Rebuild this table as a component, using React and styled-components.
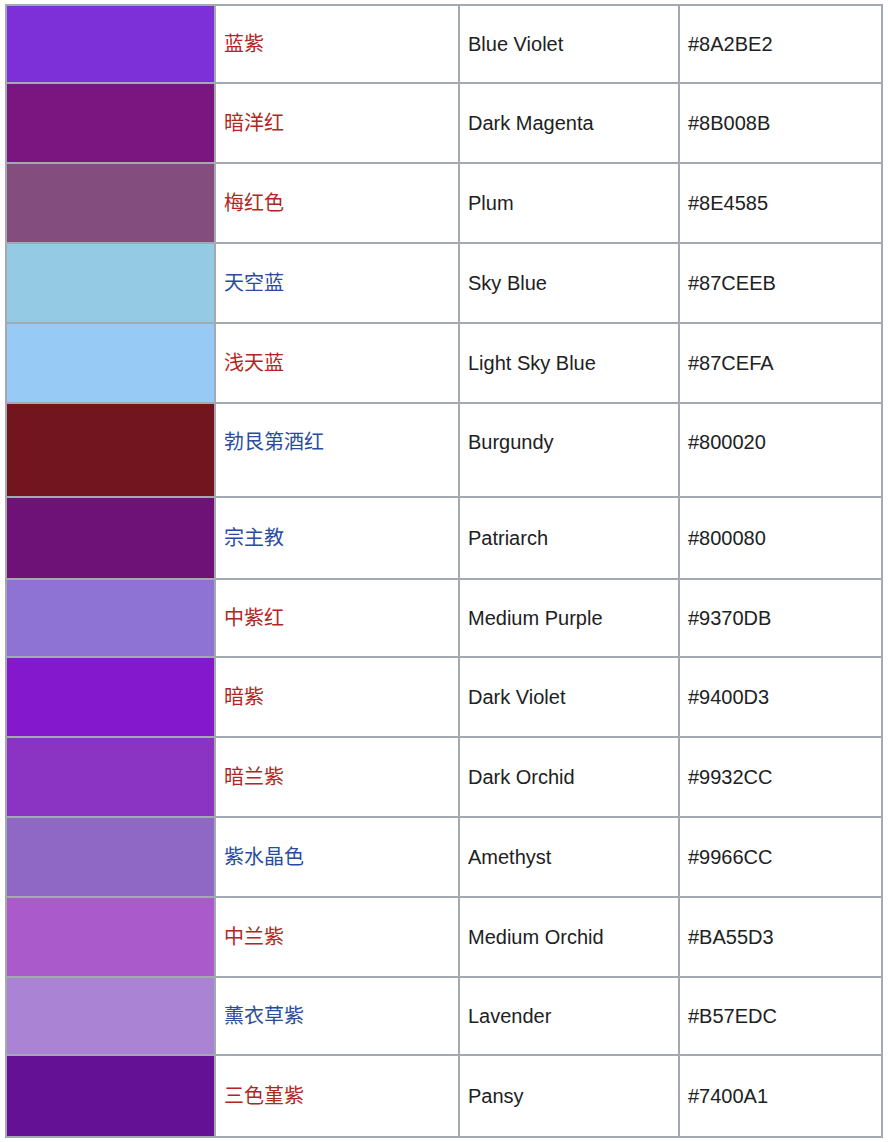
import styled, { createGlobalStyle } from "styled-components";

//Data
const colors = [
  { swatch: "#7d30d8", zh: "蓝紫", tone: "red", en: "Blue Violet", hex: "#8A2BE2", h: 78 },
  { swatch: "#7b1580", zh: "暗洋红", tone: "red", en: "Dark Magenta", hex: "#8B008B", h: 80 },
  { swatch: "#834d7e", zh: "梅红色", tone: "red", en: "Plum", hex: "#8E4585", h: 80 },
  { swatch: "#95cae5", zh: "天空蓝", tone: "blue", en: "Sky Blue", hex: "#87CEEB", h: 80 },
  { swatch: "#97cbf5", zh: "浅天蓝", tone: "red", en: "Light Sky Blue", hex: "#87CEFA", h: 80 },
  { swatch: "#72151e", zh: "勃艮第酒红", tone: "blue", en: "Burgundy", hex: "#800020", h: 94, lift: 17 },
  { swatch: "#6e1278", zh: "宗主教", tone: "blue", en: "Patriarch", hex: "#800080", h: 82 },
  { swatch: "#8f73d4", zh: "中紫红", tone: "red", en: "Medium Purple", hex: "#9370DB", h: 78 },
  { swatch: "#8418cc", zh: "暗紫", tone: "red", en: "Dark Violet", hex: "#9400D3", h: 80 },
  { swatch: "#8b34c4", zh: "暗兰紫", tone: "red", en: "Dark Orchid", hex: "#9932CC", h: 80 },
  { swatch: "#8f67c4", zh: "紫水晶色", tone: "blue", en: "Amethyst", hex: "#9966CC", h: 80 },
  { swatch: "#ab5acc", zh: "中兰紫", tone: "red", en: "Medium Orchid", hex: "#BA55D3", h: 80 },
  { swatch: "#ab83d5", zh: "薰衣草紫", tone: "blue", en: "Lavender", hex: "#B57EDC", h: 78 },
  { swatch: "#641196", zh: "三色堇紫", tone: "red", en: "Pansy", hex: "#7400A1", h: 82 },
];

const widths = [209, 244, 220, 203];

const GlobalStyle = createGlobalStyle`
  body {
    margin: 0;
    background: #ffffff;
    font-family: "Liberation Sans", "Noto Sans CJK SC", sans-serif;
  }
`;

const ColorTable = () => {
  return (
    <Page>
      <GlobalStyle />
      <Table>
        <colgroup>
          {widths.map((w, i) => (
            <Col key={i} $w={w} />
          ))}
        </colgroup>
        <tbody>
          {colors.map((c) => (
            <Row key={c.hex} $h={c.h}>
              <Swatch $color={c.swatch} />
              <Cell $lift={c.lift}>
                <ZhName $tone={c.tone}>{c.zh}</ZhName>
              </Cell>
              <Cell $lift={c.lift}>{c.en}</Cell>
              <Cell $lift={c.lift}>{c.hex}</Cell>
            </Row>
          ))}
        </tbody>
      </Table>
    </Page>
  );
};

const Page = styled.div`
  padding: 4px 0 0 5px;
`;

const Table = styled.table`
  width: 878px;
  table-layout: fixed;
  border-collapse: collapse;
  color: #202122;
  font-size: 20px;
  line-height: 1.2;
`;

const Col = styled.col`
  width: ${(p) => p.$w}px;
`;

const Row = styled.tr`
  height: ${(p) => p.$h}px;
`;

const Swatch = styled.td`
  border: 2px solid #a2a9b1;
  padding: 0;
  background: ${(p) => p.$color};
`;

const Cell = styled.td`
  border: 2px solid #a2a9b1;
  padding: 0 6px ${(p) => (p.$lift ? p.$lift : 1)}px 8px;
  vertical-align: middle;
  white-space: nowrap;
`;

const ZhName = styled.span`
  color: ${(p) => (p.$tone === "blue" ? "#2a4ca0" : "#b2261f")};
`;

export default ColorTable;
